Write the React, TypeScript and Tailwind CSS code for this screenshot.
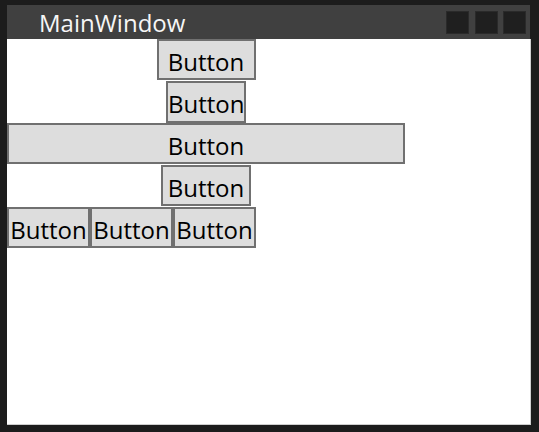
import React from 'react';

const font = { fontFamily: '"Open Sans", "Noto Sans", sans-serif' };

function WinButton({ className = '', left = false }: { className?: string; left?: boolean }) {
  return (
    <div
      className={`flex items-center ${left ? 'justify-start' : 'justify-center'} overflow-hidden border-2 border-[#707070] bg-[#dddddd] pt-[4px] text-[24px] text-black whitespace-nowrap ${className}`}
    >
      Button
    </div>
  );
}

export default function App() {
  return (
    <div
      className="flex h-[432px] w-[539px] flex-col bg-[#1c1c1c] pb-[7px] pl-[7px] pr-[8px] pt-[5px]"
      style={font}
    >
      {/* title bar */}
      <div className="mr-px flex h-[34px] shrink-0 items-center bg-[#404040] pl-[32px] pr-[4px]">
        <span className="flex-1 pt-[1px] text-[24px] text-[#f6f6f6]">MainWindow</span>
        <div className="flex items-center">
          <div className="h-[23px] w-[23px] border border-[#2a2a2a] bg-[#1f1f1f]" />
          <div className="ml-[6px] h-[23px] w-[23px] border border-[#2a2a2a] bg-[#1f1f1f]" />
          <div className="ml-[5px] h-[23px] w-[23px] border border-[#2a2a2a] bg-[#1f1f1f]" />
        </div>
      </div>

      {/* client area */}
      <div className="flex-1 border-b border-r border-[#cfcfcf] bg-white">
        <div className="flex w-[398px] flex-col items-center">
          <WinButton className="h-[41px] w-[99px]" />
          <WinButton left className="mt-px h-[42px] w-[80px]" />
          <WinButton className="h-[41px] w-full" />
          <WinButton className="mt-px h-[41px] w-[90px]" />
          <div className="mt-px flex self-start">
            <WinButton className="h-[41px] w-[83px]" />
            <WinButton className="h-[41px] w-[83px]" />
            <WinButton className="h-[41px] w-[83px]" />
          </div>
        </div>
      </div>
    </div>
  );
}
